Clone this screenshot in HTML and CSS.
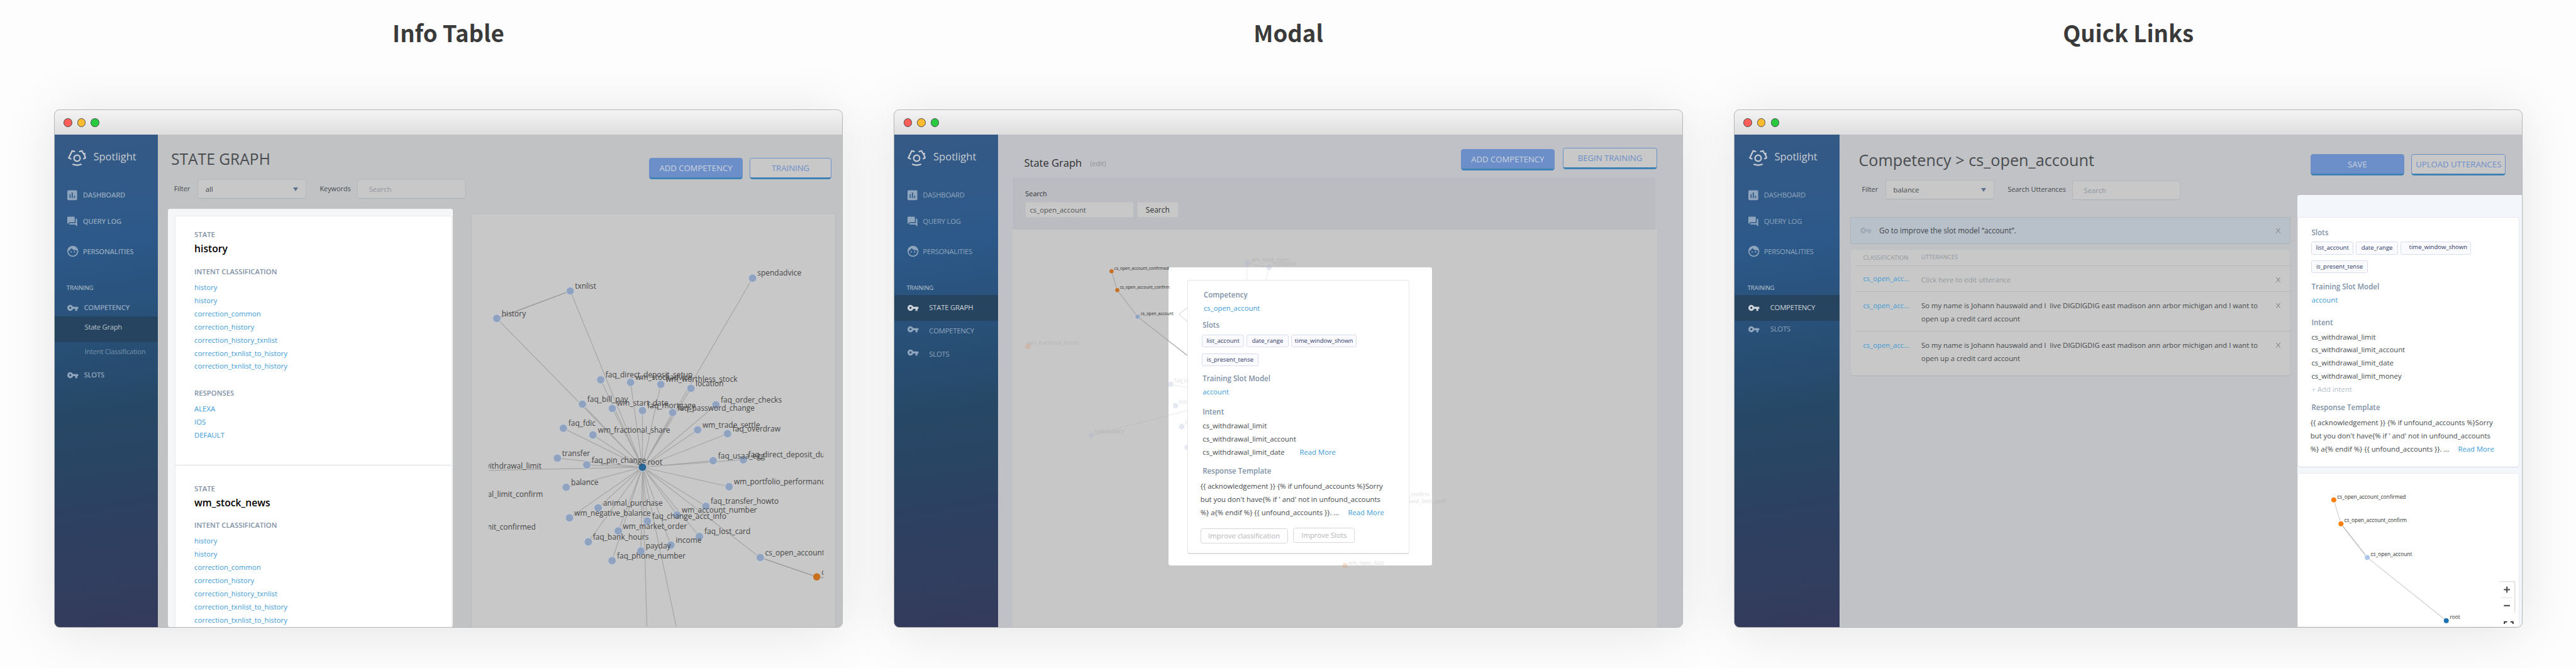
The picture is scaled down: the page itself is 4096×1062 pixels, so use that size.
FILE: index.html
```html
<!DOCTYPE html>
<html lang="en">
<head>
<meta charset="utf-8">
<title>Spotlight concepts</title>
<link rel="stylesheet" href="styles.css">
</head>
<body>
<svg class="sprite" width="0" height="0">
  <symbol id="i-dash" viewBox="3 0 24 24"><path d="M19 3H5c-1.1 0-2 .9-2 2v14c0 1.1.9 2 2 2h14c1.1 0 2-.9 2-2V5c0-1.1-.9-2-2-2zM9 17H7v-7h2v7zm4 0h-2V7h2v10zm4 0h-2v-4h2v4z"/></symbol>
  <symbol id="i-chat" viewBox="2 -1.3 26.67 26.67"><path d="M21 6h-2v9H6v2c0 .55.45 1 1 1h11l4 4V7c0-.55-.45-1-1-1zm-4 6V3c0-.55-.45-1-1-1H3c-.55 0-1 .45-1 1v14l4-4h10c.55 0 1-.45 1-1z"/></symbol>
  <symbol id="i-face" viewBox="2 1 24 24"><path d="M9 11.75c-.69 0-1.25.56-1.25 1.25s.56 1.25 1.25 1.25 1.25-.56 1.25-1.25-.56-1.25-1.25-1.25zm6 0c-.69 0-1.25.56-1.25 1.25s.56 1.25 1.25 1.25 1.25-.56 1.25-1.25-.56-1.25-1.25-1.25zM12 2C6.480 2 2 6.480 2 12s4.480 10 10 10 10-4.480 10-10S17.520 2 12 2zm0 18c-4.410 0-8-3.590-8-8 0-.29.02-.58.05-.86 2.360-1.050 4.230-2.980 5.210-5.370C11.070 8.330 14.050 10 17.420 10c.78 0 1.530-.09 2.250-.26.21.71.33 1.470.33 2.260 0 4.410-3.590 8-8 8z"/></symbol>
  <symbol id="i-key" viewBox="1 -1.2 26.4 26.4"><path d="M12.650 10C11.830 7.670 9.610 6 7 6c-3.310 0-6 2.690-6 6s2.690 6 6 6c2.610 0 4.830-1.670 5.650-4H17v4h4v-4h2v-4H12.650zM7 14c-1.100 0-2-.9-2-2s.9-2 2-2 2 .9 2 2-.9 2-2 2z"/></symbol>
  <symbol id="i-logo" viewBox="0 0 34 30"><g fill="none" stroke="currentColor" stroke-width="2.6" stroke-linejoin="round" stroke-linecap="round"><circle cx="16.700" cy="15.600" r="5.600"/><path d="M12 3.300L7.800 2 1.500 15l3.800 1.600M21.500 3.300L25.500 2l3.300 5.800 2.300-.8-1.300 1.600 2.300 6.200-3.300 1.700M9.300 26.800q7.400 2.800 14.800 0"/></g></symbol>
</svg>
<div class="board">

  <section class="shot">
    <h2>Info Table</h2>
    <div class="window">
      <div class="titlebar"><i class="red"></i><i class="yellow"></i><i class="green"></i></div>
      <div class="app">
        <nav class="side bold">
          <div class="logo"><svg><use href="#i-logo"/></svg><span>Spotlight</span></div>
          <a class="item n1"><svg><use href="#i-dash"/></svg>DASHBOARD</a>
          <a class="item n2"><svg><use href="#i-chat"/></svg>QUERY LOG</a>
          <a class="item n3"><svg><use href="#i-face"/></svg>PERSONALITIES</a>
          <div class="label">TRAINING</div>
          <a class="item key a1"><svg><use href="#i-key"/></svg>COMPETENCY</a>
          <a class="sub on">State Graph</a>
          <a class="sub">Intent Classification</a>
          <a class="item key a2"><svg><use href="#i-key"/></svg>SLOTS</a>
        </nav>
        <main class="main split info">
          <div class="left">
            <h1 class="thin">STATE GRAPH</h1>
            <div class="filters">
              <label>Filter</label><div class="select">all<i></i></div>
              <label class="l2">Keywords</label><div class="input">Search</div>
            </div>
            <div class="spot">
              <div class="spotcard">
                <section>
                  <h4>STATE</h4><h3>history</h3>
                  <h4 class="mt">INTENT CLASSIFICATION</h4>
                  <ul><li>history</li><li>history</li><li>correction_common</li><li>correction_history</li><li>correction_history_txnlist</li><li>correction_txnlist_to_history</li><li>correction_txnlist_to_history</li></ul>
                  <h4 class="mt2">RESPONSES</h4>
                  <ul><li>ALEXA</li><li>IOS</li><li>DEFAULT</li></ul>
                </section>
                <section>
                  <h4>STATE</h4><h3>wm_stock_news</h3>
                  <h4 class="mt">INTENT CLASSIFICATION</h4>
                  <ul><li>history</li><li>history</li><li>correction_common</li><li>correction_history</li><li>correction_history_txnlist</li><li>correction_txnlist_to_history</li><li>correction_txnlist_to_history</li></ul>
                </section>
              </div>
            </div>
          </div>
          <div class="right">
            <div class="buttons"><a class="btn fill b172">ADD COMPETENCY</a><a class="btn b150">TRAINING</a></div>
            <div class="graph">
              <svg class="net" viewBox="861 391 666 755">
                <defs>
                  <clipPath id="stage"><rect x="892" y="391" width="613" height="756"/></clipPath>
                </defs>
                <g clip-path="url(#stage)">
                  <path class="edge" d="M1173.600 854.300L1041.500 531.700M1173.600 854.300L1375.200 508.300M1173.600 854.300L907 582M1173.600 854.300L1097.200 694.300M1173.600 854.300L1151.900 699M1173.600 854.300L1207.200 702.700M1173.600 854.300L1262.400 710M1173.600 854.300L1063.700 739M1173.600 854.300L1118.400 746.700M1173.600 854.300V750.700M1173.600 854.300L1228.900 754.300M1173.600 854.300L1308.100 740.300M1173.600 854.300L1028.800 783M1173.600 854.300L1083 795.300M1173.600 854.300L1274.600 786M1173.600 854.300L1329.400 793M1173.600 854.300L1017.900 837.700M1173.600 854.300L1071.700 850M1173.600 854.300L1303 842.300M1173.600 854.300L1358.200 840.700M1173.600 854.300L1034 891M1173.600 854.300L1332.200 890M1173.600 854.300L1092.500 928.700M1173.600 854.300L1040.100 947M1173.600 854.300L1182.600 953M1173.600 854.300L1236.900 941.700M1173.600 854.300L1289.700 925.700M1173.600 854.300L1129.300 971M1173.600 854.300L1074.500 991M1173.600 854.300L1277.900 981M1173.600 854.300L1225.600 997M1173.600 854.300L1170.800 1007.700M1173.600 854.300L1118 1025.300M1173.600 854.300L1389.300 1019.700M1173.600 854.300L892 860.300M1173.600 854.300L1181.700 1146M1173.600 854.300L1235.500 1146"/>
                  <path class="edge dark" d="M1041.500 531.700L907 582M1389.300 1019.700L1492.700 1055L1506 1057"/>
                  <g class="dot">
                    <circle cx="1041.500" cy="531.700" r="7.400"/><circle cx="907" cy="582" r="7.400"/><circle cx="1375.200" cy="508.300" r="7.400"/><circle cx="1097.200" cy="694.300" r="7.400"/><circle cx="1151.900" cy="699" r="7.400"/><circle cx="1207.200" cy="702.700" r="7.400"/><circle cx="1262.400" cy="710" r="7.400"/><circle cx="1063.700" cy="739" r="7.400"/><circle cx="1118.400" cy="746.700" r="7.400"/><circle cx="1173.600" cy="750.700" r="7.400"/><circle cx="1228.900" cy="754.300" r="7.400"/><circle cx="1308.100" cy="740.300" r="7.400"/><circle cx="1028.800" cy="783" r="7.400"/><circle cx="1083" cy="795.300" r="7.400"/><circle cx="1274.600" cy="786" r="7.400"/><circle cx="1329.400" cy="793" r="7.400"/><circle cx="1017.900" cy="837.700" r="7.400"/><circle cx="1071.700" cy="850" r="7.400"/><circle cx="1303" cy="842.300" r="7.400"/><circle cx="1358.200" cy="840.700" r="7.400"/><circle cx="1034" cy="891" r="7.400"/><circle cx="1332.200" cy="890" r="7.400"/><circle cx="1092.500" cy="928.700" r="7.400"/><circle cx="1040.100" cy="947" r="7.400"/><circle cx="1182.600" cy="953" r="7.400"/><circle cx="1236.900" cy="941.700" r="7.400"/><circle cx="1289.700" cy="925.700" r="7.400"/><circle cx="1129.300" cy="971" r="7.400"/><circle cx="1074.500" cy="991" r="7.400"/><circle cx="1277.900" cy="981" r="7.400"/><circle cx="1225.600" cy="997" r="7.400"/><circle cx="1170.800" cy="1007.700" r="7.400"/><circle cx="1118" cy="1025.300" r="7.400"/><circle cx="1389.300" cy="1019.700" r="7.400"/>
                    <circle class="root" cx="1173.600" cy="854.300" r="7.600"/><circle class="warn" cx="1492.700" cy="1055" r="7.400"/>
                  </g>
                  <g class="tag">
                    <text x="1050" y="527.500">txnlist</text><text x="916" y="578">history</text><text x="1384" y="504">spendadvice</text>
                    <text x="1106" y="690">faq_direct_deposit_setup</text><text x="1160.700" y="695">wm_stockadvice</text><text x="1216" y="698.500">wm_worthless_stock</text><text x="1271" y="706">location</text>
                    <text x="1072.500" y="735">faq_bill_pay</text><text x="1127" y="742">wm_start_date</text><text x="1182.500" y="746.500">faq_mortgage</text><text x="1237.700" y="750.500">faq_password_change</text><text x="1317" y="736.500">faq_order_checks</text>
                    <text x="1038" y="779">faq_fdic</text><text x="1092" y="791">wm_fractional_share</text><text x="1283.500" y="782">wm_trade_settle</text><text x="1338.500" y="789">faq_overdraw</text>
                    <text x="1026.500" y="833.500">transfer</text><text x="1080.500" y="846">faq_pin_change</text><text x="1183" y="850">root</text><text x="1312" y="838">faq_usaa_egg</text><text x="1367" y="836.500">faq_direct_deposit_dup</text>
                    <text x="1043" y="887">balance</text><text x="1341" y="885.500">wm_portfolio_performance</text><text x="1101.500" y="924.500">animal_purchase</text><text x="1049" y="943">wm_negative_balance</text><text x="1191.500" y="948.500">faq_change_acct_info</text><text x="1245.500" y="937.500">wm_account_number</text><text x="1298.500" y="921.500">faq_transfer_howto</text>
                    <text x="1138" y="967">wm_market_order</text><text x="1083" y="986.500">faq_bank_hours</text><text x="1287" y="976.500">faq_lost_card</text><text x="1234.500" y="993">income</text><text x="1179.500" y="1003.500">payday</text><text x="1127" y="1021.500">faq_phone_number</text><text x="1398" y="1016">cs_open_account</text><text x="1501.500" y="1051">cs_open</text>
                    <text class="end" x="988.700" y="857">cs_withdrawal_limit</text><text class="end" x="991.500" y="909">cs_withdrawal_limit_confirm</text><text class="end" x="978.300" y="968">cs_withdrawal_limit_confirmed</text>
                  </g>
                </g>
              </svg>
            </div>
          </div>
        </main>
      </div>
    </div>
  </section>

  <section class="shot">
    <h2>Modal</h2>
    <div class="window">
      <div class="titlebar"><i class="red"></i><i class="yellow"></i><i class="green"></i></div>
      <div class="app">
        <nav class="side deep">
          <div class="logo"><svg><use href="#i-logo"/></svg><span>Spotlight</span></div>
          <a class="item n1"><svg><use href="#i-dash"/></svg>DASHBOARD</a>
          <a class="item n2"><svg><use href="#i-chat"/></svg>QUERY LOG</a>
          <a class="item n3"><svg><use href="#i-face"/></svg>PERSONALITIES</a>
          <div class="label">TRAINING</div>
          <a class="item key on"><svg><use href="#i-key"/></svg>STATE GRAPH</a>
          <a class="item key up b1"><svg><use href="#i-key"/></svg>COMPETENCY</a>
          <a class="item key up b2"><svg><use href="#i-key"/></svg>SLOTS</a>
        </nav>
        <main class="main modalview">
          <header class="bar">
            <h1 class="small">State Graph</h1><span class="edit">(edit)</span>
            <div class="buttons"><a class="btn fill b172">ADD COMPETENCY</a><a class="btn b172 raised">BEGIN TRAINING</a></div>
          </header>
          <div class="searchbox">
            <label>Search</label>
            <div class="row"><div class="field">cs_open_account</div><div class="go">Search</div></div>
          </div>
          <div class="canvas">
            <div class="sheet"></div>
            <svg class="net" viewBox="1850 419 1178 727">
              <path class="edge" d="M2030.900 495.300L2041.300 529.700L2078.600 578.300L2169 649"/>
              <g class="dot mini"><circle class="warn" cx="2030.900" cy="495.300" r="4.300"/><circle class="warn" cx="2041.300" cy="529.700" r="4.300"/><circle cx="2078.600" cy="578.300" r="4.300"/></g>
              <g class="tag t76"><text x="2035.800" y="493">cs_open_account_confirmed</text><text x="2046" y="527">cs_open_account_confirm</text><text x="2084" y="575.500">cs_open_account</text></g>
              <g class="ghost">
                <path class="edge" d="M2279 480L2318.800 488M2279 480L2278 511M2318.800 488L2313 511M1993.700 794.500L2169 750M2139 701.700L2169 708"/>
                <circle cx="2279" cy="480" r="5"/><circle cx="2318.800" cy="488" r="5"/><circle cx="1993.700" cy="794.500" r="5"/><circle cx="2139" cy="701.700" r="5"/><circle cx="2147.700" cy="740.700" r="5"/><circle cx="2159" cy="779" r="5"/><circle cx="2169" cy="817" r="5"/>
                <circle class="o" cx="1877.800" cy="632.300" r="5"/><circle class="o" cx="2457.500" cy="1033" r="5"/>
                <g class="tag t93"><text x="2286" y="477.700">wm_stock_news</text><text x="2325.400" y="484.900">stockprice</text><text x="1878" y="629">wm_fractional_shares</text><text x="1999.600" y="791.700">spendadvice</text><text x="2145.500" y="698.700">faq_change</text><text x="2154" y="737">location</text><text x="2165" y="776">faq_pin</text><text x="2463.800" y="1032">wm_open_date</text><text class="end" x="2612" y="907">limit_confirm</text><text class="end" x="2641.700" y="919">withdrawal_limit_confi</text></g>
              </g>
            </svg>
            <div class="card">
              <svg class="arrow" viewBox="0 0 18 28"><path d="M17.500 1L1.500 13.500L17.500 27" fill="#fff" stroke="#e3e3e3" stroke-width="1.500"/></svg>
              <h4>Competency</h4><p class="link">cs_open_account</p>
              <div class="inner">
                <h4 class="g1">Slots</h4>
                <div class="chips"><span class="c1">list_account</span><span class="c2">date_range</span><span class="c3">time_window_shown</span><span class="c4">is_present_tense</span></div>
                <h4 class="g2">Training Slot Model</h4><p class="link">account</p>
                <h4 class="g3">Intent</h4>
                <div class="intents"><p>cs_withdrawal_limit</p><p>cs_withdrawal_limit_account</p><p>cs_withdrawal_limit_date <span class="link more">Read More</span></p></div>
                <h4 class="g4">Response Template</h4>
                <div class="tpl"><p>{{ acknowledgement }} {% if unfound_accounts %}Sorry</p><p>but you don't have{% if ' and' not in unfound_accounts</p><p>%} a{% endif %} {{ unfound_accounts }}. ... <span class="link more2">Read More</span></p></div>
                <div class="acts"><span class="w1">Improve classification</span><span class="w2">Improve Slots</span></div>
              </div>
            </div>
          </div>
        </main>
      </div>
    </div>
  </section>

  <section class="shot">
    <h2>Quick Links</h2>
    <div class="window">
      <div class="titlebar"><i class="red"></i><i class="yellow"></i><i class="green"></i></div>
      <div class="app">
        <nav class="side deep third">
          <div class="logo"><svg><use href="#i-logo"/></svg><span>Spotlight</span></div>
          <a class="item n1"><svg><use href="#i-dash"/></svg>DASHBOARD</a>
          <a class="item n2"><svg><use href="#i-chat"/></svg>QUERY LOG</a>
          <a class="item n3"><svg><use href="#i-face"/></svg>PERSONALITIES</a>
          <div class="label">TRAINING</div>
          <a class="item key on"><svg><use href="#i-key"/></svg>COMPETENCY</a>
          <a class="item key s3"><svg><use href="#i-key"/></svg>SLOTS</a>
        </nav>
        <main class="main split quick">
          <div class="left">
            <h1>Competency &gt; cs_open_account</h1>
            <div class="filters">
              <label>Filter</label><div class="select">balance<i></i></div>
              <label class="l2">Search Utterances</label><div class="input">Search</div>
            </div>
            <div class="banner"><svg><use href="#i-key"/></svg><span>Go to improve the slot model “account”.</span><b class="x"></b></div>
            <div class="table">
              <div class="tr th"><span>CLASSIFICATION</span><span>UTTERANCES</span></div>
              <div class="tr r1"><span class="link">cs_open_acc...</span><p class="ph">Click here to edit utterance</p><b class="x"></b></div>
              <div class="tr r2"><span class="link">cs_open_acc...</span><p>So my name is Johann hauswald and I&nbsp; live DIGDIGDIG east madison ann arbor michigan and I want to<br>open up a credit card account</p><b class="x"></b></div>
              <div class="tr r3"><span class="link">cs_open_acc...</span><p>So my name is Johann hauswald and I&nbsp; live DIGDIGDIG east madison ann arbor michigan and I want to<br>open up a credit card account</p><b class="x"></b></div>
            </div>
          </div>
          <div class="right">
            <div class="buttons"><a class="btn fill b172">SAVE</a><a class="btn b172">UPLOAD UTTERANCES</a></div>
            <div class="dock">
              <div class="qcard">
                <h4>Slots</h4>
                <div class="chips"><span class="c1">list_account</span><span class="c2">date_range</span><span class="c3">time_window_shown</span><span class="c4">is_present_tense</span></div>
                <h4 class="g2">Training Slot Model</h4><p class="link">account</p>
                <h4 class="g3">Intent</h4>
                <div class="intents"><p>cs_withdrawal_limit</p><p>cs_withdrawal_limit_account</p><p>cs_withdrawal_limit_date</p><p>cs_withdrawal_limit_money</p><p class="add">+ Add intent</p></div>
                <h4 class="g4">Response Template</h4>
                <div class="tpl"><p>{{ acknowledgement }} {% if unfound_accounts %}Sorry</p><p>but you don't have{% if ' and' not in unfound_accounts</p><p>%} a{% endif %} {{ unfound_accounts }}. ... <span class="link more2">Read More</span></p></div>
              </div>
              <div class="qgraph">
                <svg class="net" viewBox="4199 865 404 280">
                  <path class="edge light" d="M4264.300 913L4277.500 957M4325.700 1018.700L4470.400 1134.500"/>
                  <path class="edge mid" d="M4277.500 957L4325.700 1018.700"/>
                  <g class="dot vivid"><circle class="warn" cx="4264.300" cy="913" r="5.200"/><circle class="warn" cx="4277.500" cy="957" r="5.200"/><circle cx="4325.700" cy="1018.700" r="5.200"/><circle class="root" cx="4470.400" cy="1134.500" r="5.200"/></g>
                  <g class="tag t96"><text x="4270.400" y="910.700">cs_open_account_confirmed</text><text x="4283.500" y="954">cs_open_account_confirm</text><text x="4332" y="1016.500">cs_open_account</text><text x="4477" y="1131.500">root</text></g>
                  <path d="M4567.500 1062.800H4596V1119.500" fill="none" stroke="#dcdad6" stroke-width="1.600"/>
                  <path d="M4571 1092.300H4592" stroke="#d9d9d9" stroke-width="1"/>
                  <path d="M4576 1077.600H4587M4581.500 1072V1083.200M4576 1107H4587" stroke="#555" stroke-width="2.600"/>
                  <path d="M4577 1140.500V1136.500H4582M4588 1136.500H4592.700V1140.500" fill="none" stroke="#222" stroke-width="2"/>
                </svg>
              </div>
            </div>
          </div>
        </main>
      </div>
    </div>
  </section>
</div>
</body>
</html>
```
FILE: styles.css
```css
* { box-sizing: border-box; margin: 0; padding: 0; }
html, body { background: #fdfdfd; overflow: hidden; }
body { font-family: "Open Sans", "Noto Sans", sans-serif; font-size: 13px; line-height: 24px; color: #45484c; }
svg { display: block; fill: currentColor; flex: none; }
ul { list-style: none; }
.sprite { display: none; }

.board { zoom: .87; width: 4708px; height: 1221px; overflow: hidden; padding-left: 98.5px; display: grid; grid-template-columns: repeat(3, 1442px); column-gap: 93.2px; align-content: start; }
.shot { display: flex; flex-direction: column; }
.shot h2 { height: 200px; padding-top: 30px; text-align: center; font: 700 42px/60px "Noto Sans CJK JP", "Open Sans", sans-serif; color: #3a3a3a; white-space: nowrap; }

.window { height: 947px; display: flex; flex-direction: column; border: 1px solid #b5b7b6; border-radius: 10px; background: #c0c2c6; box-shadow: 0 8px 100px rgba(0,0,0,.1); }
.titlebar { height: 45px; flex: none; display: flex; gap: 9.3px; padding: 15.3px 0 0 16.5px; border-radius: 9px 9px 0 0; background: linear-gradient(#f3f3f3, #e0dfe0); }
.titlebar i { width: 15.6px; height: 15.6px; border-radius: 50%; border: 1px solid; }
.red { background: #fd5f58; border-color: #e24b45; }
.yellow { background: #fdbc2f; border-color: #dfa124; }
.green { background: #29c940; border-color: #1dac2d; }
.app { flex: 1; min-height: 0; display: flex; border-radius: 0 0 9px 9px; overflow: hidden; }

.side { width: 189px; flex: none; padding-top: 26px; display: flex; flex-direction: column; color: #8fa5bd; background: linear-gradient(172deg, #365a86 0%, #2c5989 22%, #284f76 42%, #264866 56%, #2d4162 76%, #343a5c 100%); }
.third { width: 191.500px; padding-left: 2px; }
.third .on { margin-left: -2px; padding-left: 25.300px; }
.logo { height: 30px; display: flex; align-items: center; padding-left: 24px; gap: 13px; font-size: 19px; color: #c6ccd2; }
.logo svg { width: 34px; height: 30px; margin-top: 3px; }
.item { height: 24px; display: flex; align-items: center; padding-left: 23.300px; gap: 4.500px; font-size: 13px; letter-spacing: -.25px; white-space: nowrap; }
.item svg { width: 24px; height: 24px; }
.bold .item { font-weight: 600; letter-spacing: -.3px; }
.bold .key { gap: 6.500px; }
.deep .key { gap: 16px; }
.n1 { margin-top: 43px; } .n2 { margin-top: 24px; } .n3 { margin-top: 31px; }
.label { margin-top: 43px; padding-left: 22px; font-size: 11px; letter-spacing: -.2px; color: #b9c4cf; }
.a1 { margin-top: 12px; margin-bottom: 3.500px; } .a2 { margin-top: 18.500px; }
.item.on { height: 47px; background: #26445f; color: #cdd3d8; }
.b1 { margin-top: 7px; } .b2 { margin-top: 18.500px; } .s3 { margin-top: 4px; }
.up svg { margin-top: -6px; }
.sub { padding-left: 55px; height: 24px; margin-top: 5.500px; color: #7590a9; letter-spacing: -.35px; white-space: nowrap; }
.sub.on { height: 46.500px; margin-top: 0; padding-top: 7.500px; background: #26445f; color: #b9c3cc; }

.main { flex: 1; min-width: 0; display: flex; white-space: nowrap; }
.left, .right { display: flex; flex-direction: column; }
h1 { font-weight: 400; font-size: 29px; line-height: 40px; height: 40px; color: #4a4c50; }
.filters { display: flex; align-items: center; height: 36px; margin-top: 16.500px; }
.filters label, .searchbox label { flex: none; font-size: 12.500px; }
.select, .input { flex: none; height: 36px; width: 198px; border: 1px solid #b6b8ba; border-bottom: 2px solid #acb0b4; border-radius: 4px; background: #c8c8c8; line-height: 34px; display: flex; align-items: center; justify-content: space-between; padding: 0 13px; }
.select i { border: 5.500px solid transparent; border-top: 7px solid #5d6f8f; border-bottom: 0; }
.input { padding-left: 20px; color: #8e969e; }

.buttons { display: flex; gap: 12px; }
.btn { height: 39px; border: 1px solid #6c8fc9; border-bottom: 3.500px solid #3f82b5; border-radius: 5px; background: #c8c8c8; color: #6c8fc9; font-size: 15.100px; line-height: 36px; text-align: center; }
.fill { background: #6c8fc9; color: #ccd3dc; }
.b172 { width: 172px; } .b150 { width: 150px; }

.info { background: #c0c2c4; }
.info .left { width: 539px; flex: none; padding: 25px 0 0 18.500px; }
.info h1 { padding-left: 5.500px; font-size: 28.300px; }
.info .filters { padding-left: 11px; }
.info .select { margin-left: 14px; }
.l2 { margin-left: 25px; }
.info .input { margin-left: 12px; }
.spot { margin-top: 17.500px; flex: 1; min-height: 0; background: #f4f6f8; border-radius: 4px 4px 4px 4px; padding: 13.500px 1px 0 12.500px; overflow: hidden; }
.spotcard { height: 100%; background: #fff; border: 1px solid #e8eaec; border-bottom: 0; border-radius: 4px 4px 0 0; }
.spotcard section { padding: 22px 0 41px 34.500px; }
.spotcard section + section { border-top: 1px solid #dcdfe1; padding-top: 31px; }
h4 { font-size: 13px; font-weight: 600; line-height: 24px; color: #8090a6; }
h3 { font-size: 18px; line-height: 26px; font-weight: 600; color: #000; }
.mt { margin-top: 17px; margin-bottom: 5px; }
.mt2 { margin-top: 25px; margin-bottom: 5px; }
.spotcard ul { color: #3d9bd6; line-height: 24.050px; }
.info .right { flex: 1; min-width: 0; padding: 42px 11.500px 0 33px; }
.info .buttons { justify-content: flex-end; padding-right: 8px; }
.graph { flex: 1; min-height: 0; margin-top: 63px; border: 1px solid #b9bcbe; border-bottom: 0; border-radius: 4px 4px 0 0; background: #c8c8c8; }
.net { width: 100%; height: 100%; }

.edge { fill: none; stroke: #a6a6a6; stroke-width: 1.400; }
.dark { stroke: #979797; stroke-width: 1.600; }
.dot { fill: #8fa2bf; stroke: #c4ccd6; stroke-width: 1.200; }
.root { fill: #2a6694; } .warn { fill: #c96f20; }
.tag { font-size: 13.800px; fill: #474747; }
.end { text-anchor: end; }
.mini { stroke-width: .8; }
.t76 { font-size: 7.600px; fill: #2e2e2e; }
.t93 { font-size: 9.300px; fill: #8a8a8a; }
.t96 { font-size: 9.600px; fill: #333; }
.ghost { opacity: .3; fill: #a3b2cf; }
.ghost .edge { opacity: .7; }
.ghost .o { fill: #dc8a4e; opacity: .8; }
.vivid { fill: #aec7e8; stroke: #fff; }
.vivid .warn { fill: #ff7f0e; } .vivid .root { fill: #1a71b3; }
.light { stroke: #cfcfcf; } .mid { stroke: #b0b0b0; }

.modalview { flex-direction: column; background: #c0c1c6; padding-left: 28px; }
.bar { height: 79px; flex: none; display: flex; align-items: flex-start; padding: 26px 46px 0 20px; }
.small { font-size: 19px; font-weight: 500; line-height: 24px; height: 24px; margin-top: 14px; color: #2b2c2e; }
.edit { margin: 16px 0 0 15px; font-size: 12.300px; line-height: 21px; color: #8f9094; }
.bar .buttons { margin-left: auto; gap: 15px; }
.raised { margin-top: -2px; }
.searchbox { height: 94px; flex: none; width: 1174px; background: #bbbcc2; border: 1px solid #b4b6bd; border-width: 1px 0 0 1px; border-radius: 4px 0 0 0; padding: 17.500px 0 0 21px; line-height: 20px; color: #2f3134; }
.searchbox label { display: block; }
.row { display: flex; gap: 6px; margin-top: 4.700px; }
.field, .go { height: 29px; border-radius: 3px; border: 1px solid #bfbfc3; background: #c8c8c8; line-height: 27px; }
.field { width: 198px; padding-left: 7px; color: #505356; }
.go { width: 76px; text-align: center; font-size: 13.800px; }
.canvas { position: relative; flex: 1; min-height: 0; width: 1178px; margin-left: -1px; background: #c7c7c7; }
.sheet { position: absolute; left: 285px; top: 69px; width: 481px; height: 545px; border-radius: 4px; background: #fff; }
.canvas .net { position: absolute; inset: 0; }
.card { position: absolute; left: 319px; top: 92px; width: 405.500px; height: 501px; background: #fff; border: 1px solid #e6e6e6; border-bottom: 3px solid #dedfe0; border-radius: 4px; padding: 15px 0 0 29px; }
.arrow { position: absolute; left: -18px; top: 49px; width: 18px; height: 28px; }
.card h4, .qcard h4 { font-size: 13.300px; }
.link { color: #3d9bd6; }
.inner { margin-left: -2px; }
.chips { display: flex; flex-wrap: wrap; gap: 10.600px 5px; margin-top: 4.300px; width: 320px; font-size: 11px; line-height: 21px; color: #2a3563; }
.chips span { height: 23.400px; border: 1px solid #d8ddeb; border-radius: 3px; background: #fafaff; text-align: center; }
.card .chips { margin-left: -1px; }
.c1, .c2 { width: 76.500px; } .c3 { width: 119.500px; } .c4 { width: 102.500px; }
.g1 { margin-top: 8px; } .g2 { margin-top: 11.300px; } .g3 { margin-top: 13px; } .g4 { margin-top: 10px; }
.intents { margin-top: 2px; }
.more { margin-left: 24px; }
.more2 { margin-left: 13px; }
.tpl { margin: 4px 0 0 -4px; }
.acts { display: flex; gap: 10px; margin: 16px 0 0 -4px; align-items: flex-start; color: #b3b5b8; line-height: 25px; }
.acts span { height: 27.500px; border: 1.500px solid #d6d7d8; border-radius: 4px; text-align: center; }
.w1 { width: 159.500px; } .w2 { width: 113px; margin-top: -1px; }

.quick .left { width: 825px; flex: none; padding: 26px 0 0 20.500px; }
.quick h1 { padding-left: 15px; }
.quick .filters { padding-left: 21px; }
.quick .select { margin-left: 14px; }
.quick .input { margin-left: 11.500px; margin-top: 2px; }
.banner { height: 49px; flex: none; margin-top: 32.500px; display: flex; align-items: center; padding-left: 17px; background: #b8c1ca; border: 1px solid #abb6bd; border-bottom: 2px solid #a6b0b7; border-radius: 4px; font-size: 13.500px; color: #3f4449; }
.banner svg { width: 24px; color: #9fabb7; height: 24px; margin-right: 10.500px; }
.x { position: relative; width: 9px; height: 9px; margin-left: auto; margin-right: 17px; }
.x::before, .x::after { content: ""; position: absolute; left: 4px; top: -1px; width: 1.200px; height: 11px; background: #84898e; transform: rotate(40deg); }
.x::after { transform: rotate(-40deg); }
.table { height: 232px; margin-top: 9.500px; border: 1px solid #bbbec0; border-bottom: 2px solid #aeb1b4; border-radius: 4px; background: #c8c8c8; padding-left: 9px; }
.tr { display: flex; border-bottom: 1px solid #b4b6b8; padding-left: 13px; }
.tr > span { width: 106.500px; flex: none; }
.th { height: 29px; font-size: 11px; line-height: 29px; color: #92999f; letter-spacing: -.05px; }
.r1 { height: 48px; padding-top: 12.500px; } .r1 .x { margin-top: 8px; }
.r1 .ph { color: #92999f; padding-top: 1.500px; }
.r2 { height: 72px; padding-top: 13.500px; } .r2 .x, .r3 .x { margin-top: 7px; }
.r3 { border: 0; padding-top: 14px; }
.th span:last-child { margin-top: -1px; }
.quick .right { flex: 1; min-width: 0; padding-top: 36px; padding-left: 12px; }
.quick .buttons { padding-left: 24px; gap: 13px; }
.dock { flex: 1; min-height: 0; margin-top: 35.700px; background: #f3f6fb; border-radius: 4px 0 0 0; padding: 39.500px 5.500px 0 0; display: flex; flex-direction: column; gap: 10.500px; }
.qcard { height: 457.500px; flex: none; background: #fff; border: 1px solid #e6e8ec; border-bottom: 2px solid #d5d8dd; border-radius: 4px; padding: 16px 0 0 25px; }
.qcard .g2 { margin-top: 14px; } .qcard .g3 { margin-top: 17px; } .qcard .g4 { margin-top: 9px; }
.qcard .c3 { width: 128px; padding-left: 9px; line-height: 18px; }
.qcard .chips { margin-left: 0; }
.qcard .tpl { margin-left: -2px; }
.add { color: #b3bfcb; }
.qgraph { flex: 1; min-height: 0; background: #fff; border: 1px solid #e8eaee; border-radius: 4px; }
```
